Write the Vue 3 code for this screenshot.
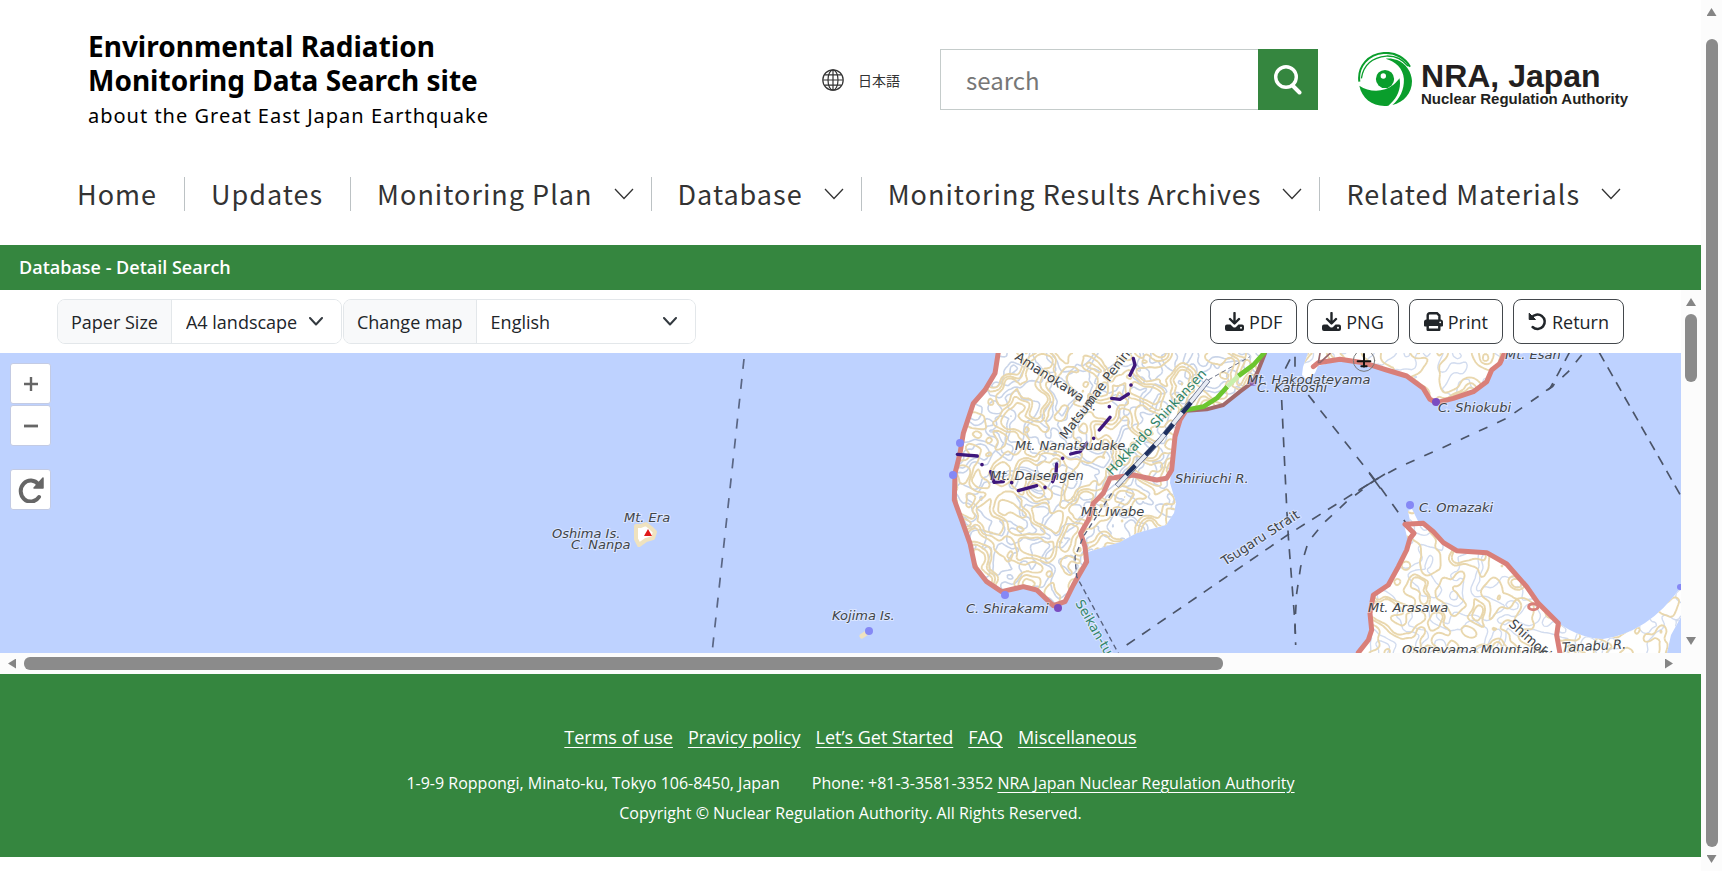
<script setup>
import { ref } from 'vue'

const navItems = [
  { label: 'Home', menu: false },
  { label: 'Updates', menu: false },
  { label: 'Monitoring Plan', menu: true },
  { label: 'Database', menu: true },
  { label: 'Monitoring Results Archives', menu: true },
  { label: 'Related Materials', menu: true },
]
const footerLinks = ['Terms of use', 'Pravicy policy', 'Let’s Get Started', 'FAQ', 'Miscellaneous']

const query = ref('')
const paper = ref('A4 landscape')
const mapLang = ref('English')

/* Terrain lines: marching squares over a smooth pseudo-random height field. */
function hash(x, y, s) {
  const n = Math.sin(x * 127.1 + y * 311.7 + s * 74.7) * 43758.5453
  return n - Math.floor(n)
}
function noise(x, y, s) {
  const xi = Math.floor(x)
  const yi = Math.floor(y)
  const u = x - xi
  const v = y - yi
  const a = u * u * (3 - 2 * u)
  const b = v * v * (3 - 2 * v)
  const top = hash(xi, yi, s) * (1 - a) + hash(xi + 1, yi, s) * a
  const bottom = hash(xi, yi + 1, s) * (1 - a) + hash(xi + 1, yi + 1, s) * a
  return top * (1 - b) + bottom * b
}
function contours(x0, y0, x1, y1, size, seed, levels) {
  const step = 3
  const h = (x, y) => {
    const u = (x + y * 0.5) / size
    const v = (y - x * 0.5) / size
    return noise(u, v, seed) * 0.7 + noise(u * 2, v * 2, seed + 5) * 0.3
  }
  let d = ''
  for (let y = y0; y < y1; y += step) {
    for (let x = x0; x < x1; x += step) {
      const c = [h(x, y), h(x + step, y), h(x + step, y + step), h(x, y + step)]
      for (const l of levels) {
        const pts = []
        const corner = [[x, y], [x + step, y], [x + step, y + step], [x, y + step]]
        for (let i = 0; i < 4; i++) {
          const j = (i + 1) % 4
          if (c[i] > l !== c[j] > l) {
            const t = (l - c[i]) / (c[j] - c[i])
            pts.push([
              (corner[i][0] + (corner[j][0] - corner[i][0]) * t).toFixed(1),
              (corner[i][1] + (corner[j][1] - corner[i][1]) * t).toFixed(1),
            ])
          }
        }
        for (let k = 0; k + 1 < pts.length; k += 2) {
          d += `M${pts[k].join(' ')}L${pts[k + 1].join(' ')}`
        }
      }
    }
  }
  return d
}
const hills = contours(945, 0, 1290, 270, 19, 3, [0.36, 0.5, 0.64])
const valleys = contours(945, 0, 1290, 270, 17, 11, [0.42, 0.58])
const hillsEast = contours(1295, 0, 1684, 300, 24, 7, [0.38, 0.6, 0.68])
const valleysEast = contours(1295, 0, 1684, 300, 21, 23, [0.4, 0.6])

const labels = [
  { t: 'Mt. Era', x: 624, y: 169 },
  { t: 'Oshima Is.', x: 552, y: 185 },
  { t: 'C. Nanpa', x: 571, y: 196 },
  { t: 'Kojima Is.', x: 832, y: 267 },
  { t: 'C. Shirakami', x: 966, y: 260 },
  { t: 'Mt. Nanatsudake', x: 1015, y: 97 },
  { t: 'Mt. Daisengen', x: 990, y: 127 },
  { t: 'Mt. Iwabe', x: 1081, y: 163 },
  { t: 'Shiriuchi R.', x: 1175, y: 130 },
  { t: 'Mt. Hakodateyama', x: 1247, y: 31 },
  { t: 'C. Kattoshi', x: 1257, y: 39 },
  { t: 'C. Shiokubi', x: 1438, y: 59 },
  { t: 'Mt. Esan', x: 1505, y: 6 },
  { t: 'C. Omazaki', x: 1419, y: 159 },
  { t: 'Mt. Arasawa', x: 1368, y: 259 },
  { t: 'Osoreyama Mountains.', x: 1402, y: 301 },
]
const tilted = [
  { t: 'Tanabu R.', x: 1562, y: 299, r: -3, k: 'italic' },
  { t: 'Shimokita', x: 1508, y: 272, r: 42, k: '' },
  { t: 'Amanokawa R.', x: 1014, y: 6, r: 33, k: '' },
  { t: 'Matsumae Peninsula', x: 1066, y: 87, r: -53, k: '' },
  { t: 'Hokkaido Shinkansen', x: 1112, y: 123, r: -47, k: 'rail' },
  { t: 'Tsugaru Strait', x: 1225, y: 213, r: -33, k: '' },
  { t: 'Seikan-tunnel', x: 1075, y: 250, r: 60, k: 'rail' },
]
</script>

<template>
  <div class="window">
    <div class="page">
      <header class="header">
        <div class="top">
          <a class="brand" href="#">
            <span class="brand-title">Environmental Radiation<br />Monitoring Data Search site</span>
            <span class="brand-sub">about the Great East Japan Earthquake</span>
          </a>
          <div class="tools">
            <a class="lang" href="#" lang="ja">
              <svg width="22" height="22" viewBox="0 0 22 22" fill="none" stroke="#333" stroke-width="1.2" aria-hidden="true">
                <circle cx="11" cy="11" r="10.2" />
                <ellipse cx="11" cy="11" rx="5" ry="10.2" />
                <path d="M11 1v20M1 11h20M2.5 5.8h17M2.5 16.2h17" />
              </svg>
              日本語
            </a>
            <form class="search" role="search" @submit.prevent>
              <input v-model="query" type="text" placeholder="search" aria-label="search" />
              <button type="submit" aria-label="Search">
                <svg width="28" height="30" viewBox="0 0 28 30" fill="none" stroke="#fff" aria-hidden="true">
                  <circle cx="12" cy="12" r="10.3" stroke-width="3.400" />
                  <path d="M18.500 20.500l7 7" stroke-width="4" stroke-linecap="round" />
                </svg>
              </button>
            </form>
            <a class="nra" href="#">
              <svg width="54" height="54" viewBox="0 0 160 160" aria-hidden="true">
                <g fill="#0a9e2c">
                  <path d="M4 100C34 120 76 120 104 98C114 90 120 82 123 78C129 108 116 138 90 159C46 164 12 140 4 100Z" />
                  <path d="M82 20C110 28 134 48 136 80C137 112 124 138 102 157C136 149 160 122 160 86C159 60 142 34 116 24C104 20 94 18 82 20Z" />
                  <circle cx="80" cy="80" r="27" />
                </g>
                <circle cx="75" cy="71" r="8" fill="#fff" />
                <g fill="none" stroke="#0a9e2c">
                  <path d="M4 88C-2 42 32 6 76 3C110 0 140 18 154 44" stroke-width="6" />
                  <path d="M10 78C16 38 44 16 84 12C112 11 134 24 148 42" stroke-width="4" />
                </g>
              </svg>
              <span class="nra-text">
                <span class="nra-name">NRA, Japan</span>
                <span class="nra-sub">Nuclear Regulation Authority</span>
              </span>
            </a>
          </div>
        </div>
        <nav class="nav" aria-label="Main">
          <a v-for="item in navItems" :key="item.label" class="nav-item" :class="{ menu: item.menu }" href="#">
            {{ item.label }}
            <svg v-if="item.menu" width="20" height="12" viewBox="0 0 20 12" fill="none" stroke="#333" stroke-width="1.3" aria-hidden="true">
              <path d="M1 1l9 9.500 9-9.500" />
            </svg>
          </a>
        </nav>
      </header>

      <h1 class="band">Database - Detail Search</h1>

      <main class="viewer">
        <div class="pane">
          <div class="toolbar">
            <div class="group">
              <label for="paper">Paper Size</label>
              <span class="pick paper">
                <select id="paper" v-model="paper">
                  <option>A4 landscape</option>
                  <option>A4 portrait</option>
                </select>
                <svg width="16" height="10" viewBox="0 0 16 10" fill="none" stroke="#343a40" stroke-width="2" stroke-linecap="round" stroke-linejoin="round" aria-hidden="true"><path d="M2 1l6 6.500 6-6.500" /></svg>
              </span>
            </div>
            <div class="group">
              <label for="lang">Change map</label>
              <span class="pick language">
                <select id="lang" v-model="mapLang">
                  <option>English</option>
                  <option>Japanese</option>
                </select>
                <svg width="16" height="10" viewBox="0 0 16 10" fill="none" stroke="#343a40" stroke-width="2" stroke-linecap="round" stroke-linejoin="round" aria-hidden="true"><path d="M2 1l6 6.500 6-6.500" /></svg>
              </span>
            </div>
            <div class="actions">
              <button v-for="f in ['PDF', 'PNG']" :key="f" type="button">
                <svg width="19" height="19" viewBox="0 0 19 19" aria-hidden="true">
                  <path d="M9.500 1v10M5 7l4.500 4.500L14 7" fill="none" stroke="#212529" stroke-width="2.400" stroke-linecap="round" stroke-linejoin="round" />
                  <path d="M2 12.500h3.500l2.500 2.400q1.500 1.200 3 0l2.500-2.400H17a2 2 0 0 1 2 2V17a2 2 0 0 1-2 2H2a2 2 0 0 1-2-2v-2.500a2 2 0 0 1 2-2z" fill="#212529" />
                  <circle cx="16" cy="15.700" r="1" fill="#fff" />
                </svg>
                {{ f }}
              </button>
              <button type="button">
                <svg width="19" height="19" viewBox="0 0 19 19" aria-hidden="true">
                  <path d="M3.700 8V3.200a2 2 0 0 1 2-2H13l2.400 2.400V8" fill="none" stroke="#212529" stroke-width="2.400" />
                  <path d="M2.500 7.500h14A2.500 2.500 0 0 1 19 10v3.500a1 1 0 0 1-1 1H1a1 1 0 0 1-1-1V10a2.500 2.500 0 0 1 2.500-2.500z" fill="#212529" />
                  <path d="M3.700 12.700h11.600v5H3.700z" fill="#fff" stroke="#212529" stroke-width="2.400" stroke-linejoin="round" />
                  <circle cx="16.200" cy="10.300" r=".9" fill="#fff" />
                </svg>
                Print
              </button>
              <button type="button">
                <svg width="19" height="19" viewBox="0 0 19 19" aria-hidden="true">
                  <path d="M3.500 5.800A7.200 7.200 0 1 1 4.600 15" fill="none" stroke="#212529" stroke-width="2.500" stroke-linecap="round" />
                  <path d="M1.200 1.200v6.300h6.300z" fill="#212529" stroke="#212529" stroke-linejoin="round" />
                </svg>
                Return
              </button>
            </div>
          </div>

          <div class="map">
            <svg class="canvas" role="img" aria-label="Map of the Tsugaru Strait">
              <defs>
                <clipPath id="land">
                  <path d="M998 0L995 20L973 50L963 80L960 100L955 120L954 147L961 167L970 190L975 214L987 229L1002 239L1023 234L1037 237L1053 253L1065 249L1073 232L1088 199L1120 189L1137 180L1166 172L1174 160L1176 150L1170 130L1171 117L1175 84L1180 67L1187 56L1207 55L1223 52L1240 39L1253 24L1265 0Z" />
                  <path d="M1308 0L1303 14L1302 22L1307 27L1315 20L1318 13L1340 7L1363 10L1387 17L1407 23L1423 35L1430 46L1437 49L1453 45L1473 39L1487 29L1492 17L1500 10L1505 0Z" />
                  <path d="M1358 300L1368 287L1372 277L1370 260L1373 242L1388 232L1398 214L1407 197L1407 184L1404 171L1410 168L1408 158L1412 156L1418 168L1433 179L1443 190L1457 198L1487 200L1507 211L1527 234L1538 250L1558 270Q1582 286 1603 286Q1648 280 1681 234V264L1671 282L1667 300Z" />
                </clipPath>
              </defs>

              <g clip-path="url(#land)" fill="none">
                <rect width="100%" height="300" fill="#fff" />
                <path :d="valleys" stroke="#c9d4e8" stroke-width="1.600" />
                <path :d="valleysEast" stroke="#d2dcef" stroke-width="1.400" />
                <path :d="hills" stroke="#e9d7ad" stroke-width="1.900" />
                <path :d="hillsEast" stroke="#e9d7ad" stroke-width="1.900" />
              </g>

              <g stroke="#efe2bf" fill="#fff">
                <path d="M636 173l5 0 5-2 5 4 4 4-2 6-7 2-7 5-3-6z" stroke-width="4" stroke-linejoin="round" />
                <path d="M862 283l6-4" stroke-width="5" stroke-linecap="round" />
              </g>
              <path d="M648 176l4 7h-8z" fill="#e01818" />

              <g transform="translate(920 -13) scale(.33333)" fill="none" stroke-linejoin="round" stroke-linecap="round">
                <path d="M800 212L860 208L910 195L960 155L1000 125L1015 90L1035 40" stroke="#a2696b" stroke-width="12" />
                <path d="M235 36L225 100L195 150L160 190L145 235L130 280L120 340L105 400L103 480L125 540L150 610L165 680L200 725L245 755L310 740L350 750L400 797L435 785L460 735L500 665L495 620L482 580L505 540L520 490L550 460L570 415L640 405L710 420L740 415L755 390L765 290L780 240L800 208" stroke="#d7817d" stroke-width="15" />
                <g stroke="#6cc62f" stroke-width="14" stroke-linecap="butt">
                  <path d="M782 213L850 200L890 175L922 140M955 108L1000 75L1035 36" />
                  <path d="M922 140L955 108" stroke="#c9efad" />
                </g>
                <g stroke-linecap="butt">
                  <path d="M590 438L720 300L865 120" stroke="#54607f" stroke-width="15" />
                  <path d="M591 437L720 300L864 121" stroke="#e8ecf5" stroke-width="11" />
                  <path d="M618 405L720 300L832 164" stroke="#1e3060" stroke-width="13" stroke-dasharray="40 44" />
                  <path d="M865 120L900 100L990 50" stroke="#6b7187" stroke-width="3" stroke-dasharray="14 9" />
                  <path d="M575 460L490 590L465 650L470 710L530 820L595 940" stroke="#57617d" stroke-width="4" stroke-dasharray="16 11" />
                </g>
                <path d="M640 55L645 75L630 106M575 175L600 178L625 162M570 232L538 270M500 310L480 335L452 342M410 372L408 400L398 425M350 437L295 452M250 425L222 427L212 395M172 348L112 343" stroke="#3e177c" stroke-width="10" />
                <path d="M633 135h0M568 200h0M521 295h0M428 355h0M375 442h0M275 428h0M186 374h0" stroke="#3e177c" stroke-width="11" />
                <g stroke="#4b5468" stroke-width="5" stroke-dasharray="30 26" stroke-linecap="butt">
                  <path d="M1085 180L1100 500L1105 590L1125 850L1127 915" />
                  <path d="M620 915L1110 580L1365 420" />
                  <path d="M1125 50V80M1110 58L1096 86" stroke-dasharray="none" />
                </g>
              </g>

              <g transform="translate(1290 -13) scale(.33333)" fill="none" stroke-linejoin="round" stroke-linecap="round">
                <g stroke="#4b5468" stroke-width="5" stroke-dasharray="28 24" stroke-linecap="butt">
                  <path d="M928 38L1171 465" stroke-dasharray="30 21" />
                  <path d="M875 45L835 95L780 145L650 235L520 295L330 380L255 420L170 485L100 550L55 605L32 680L20 760L15 850L17 913" stroke-dasharray="28 32" />
                  <path d="M838 38L805 100L780 145" />
                  <path d="M55 165L255 420L350 552" stroke-dasharray="30 29" />
                  <path d="M205 452L285 402M238 400L272 446M768 152L790 138" stroke-dasharray="none" />
                </g>
                <g stroke="#d97f79" stroke-width="15">
                  <path d="M70 80L85 68L150 58L220 68L290 90L350 108L400 145L420 178L440 188L490 175L550 155L590 125L605 90L630 70L645 36" />
                  <path d="M205 938L235 900L245 870L240 820L250 765L295 735L325 680L350 630L360 595L372 580L345 553L400 550L430 575L460 608L500 632L590 638L650 672L710 740L745 790L805 850L800 885L810 940" />
                  <ellipse cx="730" cy="800" rx="14" ry="9" stroke-width="9" />
                </g>
                <path d="M90 40L85 68M90 68L120 40" stroke="#98676b" stroke-width="5" />
                <circle cx="222" cy="62" r="32" stroke="#777" stroke-width="3" />
                <path d="M222 42V80M203 64H241M214 79H230" stroke="#111" stroke-width="6" />
              </g>

              <g fill="#8588f5">
                <circle cx="960" cy="90" r="4" /><circle cx="953" cy="122" r="4" />
                <circle cx="1005" cy="242" r="4" /><circle cx="1410" cy="152" r="4" />
                <circle cx="869" cy="278" r="4" /><circle cx="1680" cy="234" r="3" />
              </g>
              <g fill="#7a4cc0">
                <circle cx="1058" cy="255" r="4" /><circle cx="1436" cy="49" r="4" /><circle cx="1253" cy="29" r="4" opacity=".6" />
              </g>
              <path d="M744 6L729 145L712 300" fill="none" stroke="#5a6684" stroke-width="1.700" stroke-dasharray="10 10" />

              <text v-for="l in labels" :key="l.t" class="place italic" :x="l.x" :y="l.y">{{ l.t }}</text>
              <text v-for="l in tilted" :key="l.t" class="place" :class="l.k" :transform="`translate(${l.x} ${l.y}) rotate(${l.r})`">{{ l.t }}</text>
            </svg>
            <div class="controls">
              <div class="zoom">
                <button type="button" aria-label="Zoom in">
                  <svg width="14" height="14" viewBox="0 0 14 14" stroke="#666" stroke-width="2.400" aria-hidden="true"><path d="M7 0v14M0 7h14" /></svg>
                </button>
                <button type="button" aria-label="Zoom out">
                  <svg width="14" height="14" viewBox="0 0 14 14" stroke="#666" stroke-width="2.800" aria-hidden="true"><path d="M0 7h14" /></svg>
                </button>
              </div>
              <button class="reset" type="button" aria-label="Reset view">
                <svg width="28" height="26" viewBox="0 0 28 26" fill="none" stroke="#666" aria-hidden="true">
                  <path d="M21.500 7.500A10 10.500 0 1 0 22 20" stroke-width="4" stroke-linecap="round" />
                  <path d="M26 1v10H17z" fill="#666" stroke-width="1.500" stroke-linejoin="round" />
                </svg>
              </button>
            </div>
          </div>
        </div>

        <div class="bar vertical" aria-hidden="true">
          <i class="arrow up"></i><i class="thumb short"></i><i class="arrow down end"></i>
        </div>
        <div class="bar horizontal" aria-hidden="true">
          <i class="arrow left"></i><i class="thumb wide"></i><i class="arrow right end"></i>
        </div>
      </main>

      <footer class="footer">
        <div class="links">
          <a v-for="l in footerLinks" :key="l" href="#">{{ l }}</a>
        </div>
        <p class="address">
          <span>1-9-9 Roppongi, Minato-ku, Tokyo 106-8450, Japan</span>
          <span>Phone: +81-3-3581-3352 <a href="#">NRA Japan Nuclear Regulation Authority</a></span>
        </p>
        <p>Copyright © Nuclear Regulation Authority. All Rights Reserved.</p>
      </footer>
    </div>

    <div class="bar vertical main-bar" aria-hidden="true">
      <i class="arrow up"></i><i class="thumb tall"></i><i class="arrow down"></i>
    </div>
  </div>
</template>

<style>
body { margin: 0; background: #fff; }
</style>

<style scoped>
* { box-sizing: border-box; }
a { color: inherit; }
button, input, select { font: inherit; color: inherit; }
.window {
  display: grid;
  grid-template-columns: minmax(0, 1fr) 21px;
  min-height: 100vh;
  font-family: "Open Sans", "Noto Sans", sans-serif;
  font-size: 18px;
  color: #212529;
}
.header {
  padding: 29px 73px 34px 77px;
  font-family: "Noto Sans CJK JP", "Noto Sans", sans-serif;
}
.top { display: flex; justify-content: space-between; padding-left: 11px; }
.brand { display: flex; flex-direction: column; gap: 5px; color: #000; text-decoration: none; font-family: "Noto Sans", sans-serif; }
.brand-title { font-size: 28px; line-height: 34px; font-weight: 700; }
.brand-sub { font-size: 20px; line-height: 28px; letter-spacing: 1px; font-weight: 400; }
.tools { display: flex; align-items: flex-start; gap: 40px; padding-top: 20px; }
.lang { display: flex; align-items: center; gap: 14px; height: 62px; font-size: 14px; color: #333; text-decoration: none; }
.search { display: flex; width: 378px; height: 61px; }
.search input { flex: 1; min-width: 0; padding: 0 25px; border: 1px solid #c5cccb; border-right: 0; border-radius: 0; font-size: 24px; outline: 0; background: #fff; }
.search input::placeholder { color: #777; opacity: 1; }
.search button { width: 60px; border: 0; background: #35863f; display: grid; place-items: center; padding: 0; }
.nra { display: flex; gap: 9px; padding-top: 3px; text-decoration: none; color: #231f20; font-family: "Liberation Sans", Arial, sans-serif; font-weight: 700; }
.nra-text { display: flex; flex-direction: column; padding-top: 8px; white-space: nowrap; }
.nra-name { font-size: 32px; line-height: 32px; }
.nra-sub { font-size: 15px; line-height: 14px; }
.nav { display: flex; margin-top: 47px; font-size: 27px; font-weight: 400; letter-spacing: 1px; line-height: 34px; color: #333; }
.nav-item { display: flex; align-items: center; gap: 21px; padding: 0 17px 0 26px; border-left: 1px solid #bcc2c4; text-decoration: none; white-space: nowrap; }
.nav-item:not(.menu) { padding-right: 27px; }
.nav-item:first-child { padding-left: 0; border-left: 0; }
.nav-item:last-child { padding-right: 0; }
.band { margin: 0; padding: 0 19px; background: #35863f; color: #fff; font-size: 18px; font-weight: 600; line-height: 45px; }
.viewer { display: grid; grid-template-columns: minmax(0, 1fr) 20px; background: #fcfcfc; }
.pane { min-width: 0; }
.toolbar { display: flex; align-items: center; gap: 1px; height: 63px; padding: 0 57px; background: #fff; }
.group { display: flex; height: 45px; border: 1px solid #e3e7ea; border-radius: 8px; overflow: hidden; white-space: nowrap; }
.group label { display: flex; align-items: center; padding: 0 13px; background: #f8f9fa; border-right: 1px solid #e3e7ea; }
.pick { display: grid; align-items: center; }
.pick select { grid-area: 1 / 1; width: 100%; height: 100%; padding: 0 14px; border: 0; appearance: none; background: #fff; }
.pick svg { grid-area: 1 / 1; justify-self: end; margin-right: 17px; pointer-events: none; }
.paper { width: 169px; }
.language { width: 218px; }
.actions { display: flex; gap: 10px; margin-left: auto; }
.actions button { display: flex; align-items: center; gap: 5px; height: 45px; padding: 0 14px; border: 1px solid #43484c; border-radius: 8px; background: #fff; }
.map { position: relative; height: 300px; background: #bed2ff; overflow: hidden; }
.canvas { display: block; width: 100%; height: 300px; }
.place { font-family: "DejaVu Sans", sans-serif; font-size: 13px; fill: #404448; paint-order: stroke; stroke: #fff; stroke-opacity: .45; stroke-width: 2px; }
.italic { font-style: italic; }
.rail { fill: #338569; }
.controls { position: absolute; left: 10px; top: 10px; width: 41px; display: grid; gap: 23px; }
.zoom { display: grid; gap: 1px; }
.controls button { display: grid; place-items: center; width: 41px; height: 41px; padding: 0; border: 1px solid #c3cbe4; border-radius: 3px; background: #fff; }
.bar { display: flex; align-items: center; background: #fcfcfc; }
.vertical { flex-direction: column; padding: 8px 0; }
.horizontal { height: 21px; padding: 0 8px; }
.thumb { border-radius: 6px; background: #8b8b8b; }
.short { width: 12px; height: 68px; margin-top: 8px; }
.wide { height: 13px; width: 72%; margin-left: 8px; }
.tall { width: 12px; flex: 1; margin: 23px 0 8px; }
.end { margin-top: auto; }
.horizontal .end { margin: 0 0 0 auto; }
.arrow { background: #858585; }
.up, .down { width: 10px; height: 8px; }
.left, .right { width: 8px; height: 10px; }
.up { clip-path: polygon(50% 0, 100% 100%, 0 100%); }
.down { clip-path: polygon(0 0, 100% 0, 50% 100%); }
.left { clip-path: polygon(0 50%, 100% 0, 100% 100%); }
.right { clip-path: polygon(0 0, 100% 50%, 0 100%); }
.footer { padding: 48px 20px 29px; background: #35863f; color: #fff; text-align: center; font-size: 16px; }
.links { display: flex; justify-content: center; gap: 15px; font-size: 18px; line-height: 30px; margin-bottom: 16px; }
.footer p { margin: 0; line-height: 30px; }
.address { display: flex; justify-content: center; gap: 32px; }
.footer a { text-underline-offset: 3px; }
</style>
